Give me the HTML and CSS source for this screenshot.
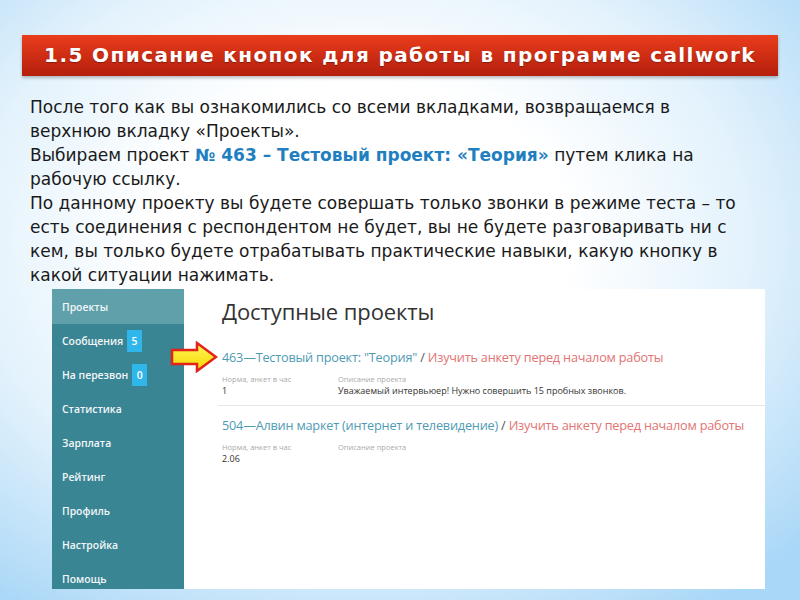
FILE: index.html
```html
<!DOCTYPE html>
<html lang="ru">
<head>
    <meta charset="UTF-8">
    <title>1.5 Описание кнопок для работы в программе callwork</title>
    <link rel="stylesheet" href="styles.css">
</head>
<body>
    <div class="slide">
        <h1 class="slide-title">1.5 Описание кнопок для работы в программе callwork</h1>

        <div class="slide-text">
            <p>После того как вы ознакомились со всеми вкладками, возвращаемся в верхнюю вкладку «Проекты».</p>
            <p>Выбираем проект <span class="hl">№ 463 – Тестовый проект: «Теория»</span> путем клика на рабочую ссылку.</p>
            <p>По данному проекту вы будете совершать только звонки в режиме теста – то есть соединения с респондентом не будет, вы не будете разговаривать ни с кем, вы только будете отрабатывать практические навыки, какую кнопку в какой ситуации нажимать.</p>
        </div>

        <div class="shot">
            <nav class="side">
                <div class="side-item active">Проекты</div>
                <div class="side-item">Сообщения <span class="badge">5</span></div>
                <div class="side-item">На перезвон <span class="badge">0</span></div>
                <div class="side-item">Статистика</div>
                <div class="side-item">Зарплата</div>
                <div class="side-item">Рейтинг</div>
                <div class="side-item">Профиль</div>
                <div class="side-item">Настройка</div>
                <div class="side-item">Помощь</div>
            </nav>

            <div class="main">
                <h2 class="main-title">Доступные проекты</h2>

                <div class="project">
                    <div class="project-link">
                        <span class="p-name">463—Тестовый проект: "Теория"</span>
                        <span class="p-sep">/</span>
                        <span class="p-study">Изучить анкету перед началом работы</span>
                    </div>
                    <div class="project-meta">
                        <div class="meta-col meta-norm">
                            <div class="meta-label">Норма, анкет в час</div>
                            <div class="meta-value">1</div>
                        </div>
                        <div class="meta-col">
                            <div class="meta-label">Описание проекта</div>
                            <div class="meta-value">Уважаемый интервьюер! Нужно совершить 15 пробных звонков.</div>
                        </div>
                    </div>
                </div>

                <div class="project">
                    <div class="project-link">
                        <span class="p-name">504—Алвин маркет (интернет и телевидение)</span>
                        <span class="p-sep">/</span>
                        <span class="p-study">Изучить анкету перед началом работы</span>
                    </div>
                    <div class="project-meta">
                        <div class="meta-col meta-norm">
                            <div class="meta-label">Норма, анкет в час</div>
                            <div class="meta-value">2.06</div>
                        </div>
                        <div class="meta-col">
                            <div class="meta-label">Описание проекта</div>
                        </div>
                    </div>
                </div>
            </div>

            <!-- pointer arrow drawn over the screenshot -->
            <svg class="arrow" viewBox="0 0 48 32" width="48" height="32">
                <defs>
                    <linearGradient id="ag" x1="0" y1="0" x2="0" y2="1">
                        <stop offset="0" stop-color="#fff65a"/>
                        <stop offset="1" stop-color="#f5d800"/>
                    </linearGradient>
                </defs>
                <path d="M2 9 H27 V2 L46 16 L27 30 V23 H2 Z" fill="url(#ag)" stroke="#e2231a" stroke-width="2.5" stroke-linejoin="miter"/>
            </svg>
        </div>
    </div>
</body>
</html>
```

FILE: styles.css
```css
html, body {
    margin: 0;
    height: 100%;
}

body {
    background: radial-gradient(ellipse 75% 75% at 45% 40%, #ffffff 35%, #e3f2fc 65%, #a9d7f7 100%);
    font-family: "DejaVu Sans", sans-serif;
    overflow: hidden;
}

.slide {
    width: 800px;
    height: 600px;
    padding-top: 35px;
    box-sizing: border-box;
}

.slide-title {
    margin: 0 22px;
    height: 41px;
    line-height: 41px;
    background: linear-gradient(#ea3d1c, #c92a12 60%, #b41f0d);
    box-shadow: 0 2px 3px rgba(0,0,0,0.25);
    color: #fff;
    font-family: "DejaVu Sans", sans-serif;
    font-weight: bold;
    font-size: 20px;
    letter-spacing: 1.4px;
    text-align: center;
    text-shadow: 0 1px 1px rgba(0,0,0,0.3);
}

.slide-text {
    width: 720px;
    margin: 19px 0 0 30px;
    font-family: "DejaVu Sans", sans-serif;
    font-size: 17px;
    line-height: 24px;
    color: #1a1a1a;
}

.slide-text p {
    margin: 0;
}

.hl {
    color: #1f7fc0;
    font-weight: bold;
}

.shot {
    position: relative;
    margin: 2px 35px 0 52px;
    height: 300px;
    display: flex;
    background: #fff;
}

.side {
    width: 132px;
    background: #3a8594;
    font-family: "Open Sans", sans-serif;
    font-weight: 600;
    font-size: 10.4px;
    color: #f2f7f8;
}

.side-item {
    height: 34px;
    display: flex;
    align-items: center;
    padding-left: 10px;
}

.side-item.active {
    height: 35px;
    background: #5fa0ab;
}

.badge {
    display: inline-flex;
    align-items: center;
    justify-content: center;
    width: 15px;
    height: 22px;
    margin-left: 4px;
    background: #2fb6ea;
    color: #fff;
}

.main {
    flex: 1;
    padding: 7px 0 0 38px;
    font-family: "Open Sans", sans-serif;
}

.main-title {
    margin: 0 0 22px 0;
    font-weight: 400;
    font-size: 22px;
    color: #333;
    letter-spacing: -0.1px;
}

.project {
    border-bottom: 1px solid #e6e6e6;
    margin-left: -4px;
    padding-left: 4px;
    padding-bottom: 9px;
    margin-bottom: 10px;
}

.project:last-child {
    border-bottom: none;
}

.project-link {
    font-size: 12.7px;
    letter-spacing: -0.2px;
    margin-bottom: 8px;
}

.p-name {
    color: #4f9bb4;
}

.p-sep {
    color: #555;
}

.p-study {
    color: #e27373;
}

.project-meta {
    display: flex;
}

.meta-col {
    line-height: 11px;
}

.meta-norm {
    width: 116px;
}

.meta-label {
    font-size: 7.5px;
    color: #aaa;
}

.meta-value {
    font-size: 9px;
    color: #333;
}

.arrow {
    position: absolute;
    left: 118px;
    top: 52px;
}
```
